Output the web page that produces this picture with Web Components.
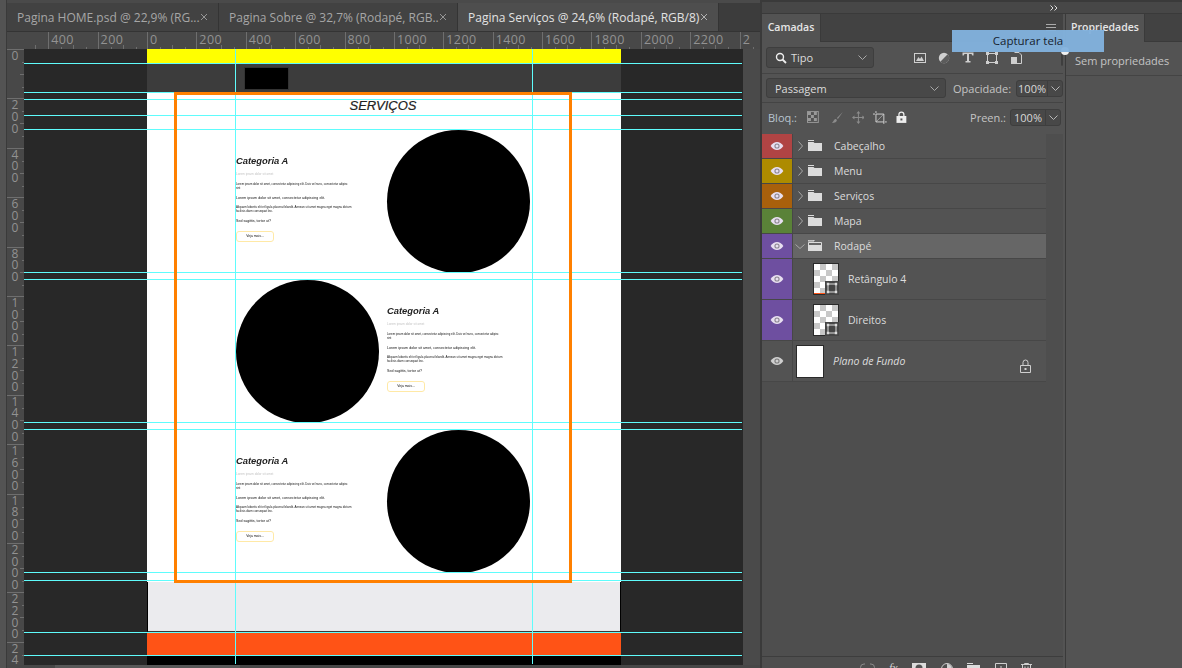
<!DOCTYPE html>
<html lang="pt"><head><meta charset="utf-8"><title>Photoshop</title>
<style>
html,body{margin:0;padding:0;background:#535353;overflow:hidden}
body{width:1182px;height:668px;font:11px "Open Sans","Noto Sans",sans-serif;color:#d4d4d4}
</style></head><body>
<ps-app></ps-app>
<script>
const def=(name,html,extra)=>{customElements.define(name,class extends HTMLElement{
  connectedCallback(){ if(this.shadowRoot)return; const s=this.attachShadow({mode:'open'}); s.innerHTML=typeof html==='function'?html(this):html; if(extra)extra(this,s);}
});};

def('ps-tab',el=>`<style>
:host{display:flex;align-items:center;box-sizing:border-box;height:28px;width:${el.getAttribute('w')}px;padding-left:10px;background:${el.hasAttribute('active')?'#4e4e4e':'#424242'};color:${el.hasAttribute('active')?'#e2e2e2':'#a6a6a6'};border-right:1px solid #343434;font-size:12px;white-space:nowrap;flex:none}
span{flex:1;overflow:hidden}
svg{margin-right:10px;flex:none}
</style><span><slot></slot></span><svg width="8" height="8" viewBox="0 0 8 8"><path d="M1 1l6 6M7 1L1 7" stroke="${el.hasAttribute('active')?'#bdbdbd':'#a0a0a0'}" stroke-width=".9"/></svg>`);

def('ps-tabs',`<style>:host{display:flex;height:28px;background:#3c3c3c;border-bottom:1px solid #343434;margin-top:3px}</style>
<ps-tab w="212">Pagina HOME.psd @ 22,9% (RG...</ps-tab><ps-tab w="239">Pagina Sobre @ 32,7% (Rodapé, RGB...</ps-tab><ps-tab w="261" active>Pagina Serviços @ 24,6% (Rodapé, RGB/8) *</ps-tab>`);

const TICK='#6e6e6e';
def('ps-ruler-h',()=>{
 const labels=['400','200','0','200','400','600','800','1000','1200','1400','1600','1800','2000','2200','2'];
 return `<style>
:host{display:flex;height:17px;background:#484848;overflow:hidden;color:#929292;font-size:12.5px;line-height:15px;letter-spacing:.4px}
.c{flex:none;width:49.4px;box-sizing:border-box;border-left:1px solid ${TICK};padding-left:2px;white-space:nowrap;overflow:hidden;height:17px;
background:linear-gradient(${TICK},${TICK}) 12px 100%/1px 2px no-repeat,linear-gradient(${TICK},${TICK}) 24px 100%/1px 4px no-repeat,linear-gradient(${TICK},${TICK}) 37px 100%/1px 2px no-repeat}
.f{flex:none;width:24.2px;background:linear-gradient(${TICK},${TICK}) 11px 100%/1px 4px no-repeat}
</style><div class="f"></div>${labels.map(l=>`<div class="c">${l}</div>`).join('')}`;
});

def('ps-ruler-v',()=>{
 const labels=['0','200','400','600','800','1000','1200','1400','1600','1800','2000','2200','24'];
 return `<style>
:host{display:block;width:17px;background:#484848;overflow:hidden;color:#929292;font-size:12px;line-height:11.7px}
.c{height:49.4px;box-sizing:border-box;border-top:1px solid ${TICK};padding:0 0 0 2px;overflow:hidden;
background:linear-gradient(${TICK},${TICK}) 100% 12px/2px 1px no-repeat,linear-gradient(${TICK},${TICK}) 100% 24px/4px 1px no-repeat,linear-gradient(${TICK},${TICK}) 100% 37px/2px 1px no-repeat}
.c:first-child{border-top-color:transparent}
i{display:block;font-style:normal;width:12px;text-align:center}
</style>${labels.map(l=>`<div class="c">${[...l].map(d=>`<i>${d}</i>`).join('')}</div>`).join('')}`;
});

def('ps-service',el=>`<style>
:host{display:flex;height:150px;width:294px;justify-content:space-between;flex-direction:${el.hasAttribute('flip')?'row-reverse':'row'}}
.t{width:143px;height:150px;color:#111;font-family:"Liberation Sans",Arial,sans-serif;white-space:nowrap;filter:blur(.2px)}
h3{margin:25px 0 0;font-size:9.4px;line-height:12px;font-style:italic;font-weight:bold;color:#222}
p{margin:0;line-height:4px}
.a{margin-top:5px;font-size:3.1px;color:#c4c4c4}
.b{margin-top:6px;font-size:2.82px}
.c{margin-top:6px;font-size:3.6px;letter-spacing:.03px}
.d{margin-top:5px;font-size:2.95px}
.e{margin-top:6px;font-size:3.6px}
.btn{margin-top:8px;box-sizing:border-box;width:38px;height:11px;border:1px solid #ffe9a6;border-radius:3px;font-size:3.4px;line-height:9px;text-align:center}
.circle{width:143px;height:143px;border-radius:50%;background:#000;flex:none}
</style><div class="t"><h3>Categoria A</h3>
<p class="a">Lorem ipsum dolor sit amet</p>
<p class="b">Lorem ipsum dolor sit amet, consectetur adipiscing elit. Duis vel nunc, consectetur adipisc<br>sint</p>
<p class="c">Lorem ipsum dolor sit amet, consectetur adipiscing elit.</p>
<p class="d">Aliquam lobortis elit et ligula placerat blandit. Aenean sit amet magna eget magna dictum<br>facilisis diam consequat leo.</p>
<p class="e">Sed sagittis, tortor ut?</p>
<div class="btn">Veja mais...</div></div><div class="circle"></div>`);

def('ps-canvas',()=>{
 const H=[63,92,99,115,129,272,279,422,429,572,580,632,655], V=[235,532];
 return `<style>
:host{display:block;position:relative;width:719px;height:616px;background:#282828;overflow:hidden;flex:none}
.page{width:474px;margin-left:123px;display:flex;flex-direction:column;height:616px}
.y{height:15px;background:#ffff00;flex:none}
.hd{height:29px;background:#3c3c3c;box-sizing:border-box;padding:4px 0 0 98px;flex:none}
.logo{width:43px;height:21px;background:#000;outline:1px solid #333}
.sv{height:489px;background:#fff;flex:none;box-sizing:border-box;padding-left:89px}
h2{margin:0;height:37px;width:295px;text-align:center;box-sizing:border-box;padding-top:5px;font:italic 13px/16px "Liberation Sans",Arial,sans-serif;color:#222;-webkit-text-stroke:.2px #222;margin-left:-3px;width:300px}
.ft{height:51px;box-sizing:border-box;background:#ebebee;border-left:1px solid #000;border-right:1px solid #000;border-bottom:2px solid #3a3a3a;flex:none}
.r{height:23px;background:#ff5316;flex:none}.k{flex:1;background:#000}
.g{position:absolute;background:#5ffcfc}
.gh{left:0;right:1px;height:1px}.gv{top:0;bottom:1px;width:1px}
.fr{position:absolute;left:150px;top:43px;width:398px;height:491px;box-sizing:border-box;border:3px solid #ff8000}
ps-service{display:flex}
</style><div class="page"><div class="y"></div><div class="hd"><div class="logo"></div></div>
<div class="sv"><h2>SERVIÇOS</h2><ps-service></ps-service><ps-service flip></ps-service><ps-service></ps-service></div>
<div class="ft"></div><div class="r"></div><div class="k"></div></div>
${H.map(y=>`<div class="g gh" style="top:${y-49}px"></div>`).join('')}${V.map(x=>`<div class="g gv" style="left:${x-24}px"></div>`).join('')}<div class="fr"></div>`;
});

const ICON={
 eye:c=>`<svg width="14" height="10" viewBox="0 0 14 10"><path d="M.6 5C2.4 2.2 4.6 1 7 1s4.6 1.2 6.4 4C11.6 7.8 9.4 9 7 9S2.4 7.8.6 5z" fill="${c}"/><circle cx="7" cy="5" r="2.6" fill="#0006"/><circle cx="7" cy="5" r="1.5" fill="${c}"/></svg>`,
 folder:`<svg width="14" height="11" viewBox="0 0 14 11"><path d="M0 0h6v1H0zM0 2h5.500l1 1H14v8H0z" fill="#dcdcdc"/></svg>`,
 open:`<svg width="14" height="11" viewBox="0 0 14 11"><path d="M0 0h6v1H0zM.5 2.500h13v8H.5z" fill="none" stroke="#dcdcdc"/><path d="M0 5h14v6H0z" fill="#dcdcdc"/></svg>`,
 right:`<svg width="5" height="10" viewBox="0 0 5 10"><path d="M.5.5L4.500 5 .5 9.500" fill="none" stroke="#a8a8a8"/></svg>`,
 down:`<svg width="10" height="5" viewBox="0 0 10 5"><path d="M.5.500L5 4.500 9.500.5" fill="none" stroke="#a8a8a8"/></svg>`
};

def('ps-layer',el=>{
 const kind=el.getAttribute('kind')||'group', color=el.getAttribute('color');
 const sel=el.hasAttribute('selected'), h={group:25,shape:41,bg:41}[kind];
 let mid='';
 if(kind==='group') mid=`<span class="chev">${sel?ICON.down:ICON.right}</span><span class="fo">${sel?ICON.open:ICON.folder}</span><span class="n" style="margin-left:12px"><slot></slot></span>`;
 if(kind==='shape') mid=`<span class="th"><span class="bd"><svg width="12" height="12" viewBox="0 0 12 12"><path d="M2 2h8v8H2z" fill="none" stroke="#ddd"/><path d="M.8.8h2.400v2.400H.8zM8.800.8h2.400v2.400H8.800zM.8 8.800h2.400v2.400H.8zM8.800 8.800h2.400v2.400H8.800z" fill="#ddd"/></svg></span>${el.hasAttribute('red')?'<span class="rd"></span>':''}</span><span class="n" style="margin-left:9px"><slot></slot></span>`;
 if(kind==='bg') mid=`<span class="wh"></span><span class="n" style="margin-left:10px;font-style:italic"><slot></slot></span><svg style="position:absolute;right:15px;top:18px" width="11" height="14" viewBox="0 0 11 14"><path d="M3 6V3.500a2.500 2.500 0 015 0V6" fill="none" stroke="#cfcfcf"/><path d="M.5 6.500h10v7H.5z" fill="none" stroke="#cfcfcf"/><rect x="4.500" y="9" width="2" height="2" fill="#cfcfcf"/></svg>`;
 return `<style>
:host{display:flex;position:relative;height:${h}px;box-sizing:border-box;border-bottom:1px solid #474747;background:${sel?'#666':'#535353'};align-items:center;color:#dcdcdc;font-size:10.5px}
.e{width:30px;height:100%;flex:none;background:${color||'transparent'};display:flex;align-items:center;justify-content:center;border-right:1px solid #474747;box-sizing:content-box}
.chev{width:${sel?10:5}px;margin-left:${sel?2:5}px;margin-right:${sel?3:5}px;display:flex;flex:none}
.fo{display:flex;flex:none;margin-top:-1px}
.th{position:relative;margin-left:20px;width:26px;height:32px;flex:none;box-sizing:border-box;border:1px solid #2a2a2a;border-width:1px 1px 1px 1px;
background:repeating-conic-gradient(#c8c8c8 0 25%,#fff 0 50%) 0 0/12px 12px}
.bd{position:absolute;right:-1px;bottom:-1px;width:14px;height:14px;background:#454545;display:flex;align-items:center;justify-content:center}
.rd{position:absolute;left:0;bottom:0;width:11px;height:1px;background:#ff5316}
.wh{margin-left:4px;width:26px;height:31px;background:#fff;outline:1px solid #2a2a2a;flex:none}
.n{white-space:nowrap}
</style><div class="e">${ICON.eye(color?'#e8dff0':'#cfcfcf')}</div>${mid}`;
});

def('ps-num',`<style>
:host{display:flex;width:51px;height:17px;box-sizing:border-box;border:1px solid #3e3e3e;border-radius:3px;background:#484848;color:#d8d8d8;font-size:11px;line-height:15px}
b{font-weight:normal;flex:1;text-align:center;border-right:1px solid #3e3e3e}
span{width:14px;display:flex;align-items:center;justify-content:center}
</style><b><slot></slot></b><span><svg width="9" height="5" viewBox="0 0 9 5"><path d="M.5.500L4.500 4.500 8.500.5" fill="none" stroke="#b8b8b8"/></svg></span>`);

def('ps-select',el=>`<style>
:host{display:flex;align-items:center;box-sizing:border-box;height:${el.getAttribute('h')||20}px;width:${el.getAttribute('w')}px;flex:none;border:1px solid #3e3e3e;border-radius:3px;background:#484848;padding:0 6px 0 8px;font-size:11px;color:#dcdcdc}
span{flex:1;display:flex;align-items:center;gap:4px}
</style><span><slot name="icon"></slot><slot></slot></span><svg width="9" height="5" viewBox="0 0 9 5"><path d="M.5.500L4.500 4.500 8.500.5" fill="none" stroke="#a8a8a8"/></svg>`);

def('ps-layers',`<style>
:host{display:flex;flex-direction:column;width:301px;height:100%;box-sizing:border-box;background:#535353;flex:none;font-size:11px;color:#c9c9c9}
.tabs{height:28px;background:#424242;display:flex;position:relative;border-bottom:1px solid #3a3a3a;box-sizing:border-box;flex:none}
.tab{width:59px;background:#535353;color:#e6e6e6;font-weight:600;font-size:10.5px;line-height:26px;text-align:center;margin-bottom:-1px;border-right:1px solid #3a3a3a;box-sizing:border-box}
.menu{position:absolute;left:284px;top:10px;width:10px;height:7px;border-top:1px solid #aaa;border-bottom:1px solid #aaa;box-sizing:border-box}
.menu:after{content:"";display:block;height:1px;background:#aaa;margin-top:2px}
.row{display:flex;align-items:center;box-sizing:border-box;border-bottom:1px solid #444;padding-left:4px;flex:none}
.f{height:32px}.bl{height:29px}.lk{height:28px;border:0;padding-left:6px}
.ico{display:flex;gap:0;margin-left:40px;align-items:center}
.ico svg{display:block;margin-right:12px}
.sw{position:relative;margin-left:4px;width:10px;height:18px;border:1px solid #3e3e3e;border-radius:5px;box-sizing:border-box;margin-top:-2px}
.sw:after{content:"";position:absolute;left:-1px;top:-2px;width:8px;height:8px;border-radius:50%;background:#f0f0f0}
.lb{color:#c4c4c4}
.lks{display:flex;align-items:center;margin-left:10px;width:100px}
.list{flex:1;min-height:0;background:#4e4e4e;margin-top:3px;display:flex;flex-direction:column}
.items{width:284px;background:#4e4e4e}
.bot{height:12px;border-top:1px solid #3d3d3d;box-sizing:border-box;flex:none;overflow:hidden;display:flex;padding-left:98px;padding-top:6px}
.bot svg{flex:none;display:block}
q{quotes:none;font-size:12px;font-family:"Liberation Serif",serif;font-style:italic;color:#d0d0d0;line-height:10px}
</style>
<div class="tabs"><div class="tab">Camadas</div><div class="menu"></div></div>
<div class="row f"><ps-select w="108" h="21"><svg slot="icon" width="12" height="12" viewBox="0 0 12 12"><circle cx="5" cy="5" r="3.500" fill="none" stroke="#eee" stroke-width="1.400"/><path d="M7.500 7.500L11 11" stroke="#eee" stroke-width="1.800"/></svg>Tipo</ps-select>
<div class="ico">
<svg width="12" height="10" viewBox="0 0 12 10"><rect x=".5" y=".5" width="11" height="9" fill="none" stroke="#cfcfcf"/><path d="M2 8l2.500-4 1.500 2 1.500-2.500L10 8z" fill="#cfcfcf"/></svg>
<svg width="12" height="12" viewBox="0 0 12 12"><circle cx="6" cy="6" r="5.200" fill="#cfcfcf"/><path d="M9.700 2.300A5.200 5.200 0 012.300 9.700z" fill="#5c5c5c"/></svg>
<svg width="12" height="11" viewBox="0 0 12 11"><path d="M.5.500h11v3h-1.200L9.500 2H7v7h1.500v1.500h-5V9H5V2H2.500L1.700 3.500H.5z" fill="#cfcfcf"/></svg>
<svg width="12" height="12" viewBox="0 0 12 12"><path d="M1.500 1.500h9v9h-9z" fill="none" stroke="#cfcfcf"/><path d="M0 0h3v3H0zM9 0h3v3H9zM0 9h3v3H0zM9 9h3v3H9z" fill="#cfcfcf"/></svg>
<svg width="11" height="12" viewBox="0 0 11 12" style="margin-left:1px"><path d="M3.500.5H8L10.500 3v8.500H5" fill="none" stroke="#cfcfcf"/><path d="M0 5h6v7H0z" fill="#cfcfcf"/></svg>
</div><div class="sw" style="margin-left:27px"></div></div>
<div class="row bl"><ps-select w="180">Passagem</ps-select><span class="lb" style="margin-left:7px;margin-right:5px">Opacidade:</span><ps-num>100%</ps-num></div>
<div class="row lk"><span class="lb" style="color:#b8c4d0">Bloq.:</span>
<div class="lks">
<svg width="12" height="12" viewBox="0 0 12 12" style="margin-right:12px"><rect x=".5" y=".5" width="11" height="11" fill="none" stroke="#999"/><path d="M1 1h3v3H1zM7 1h3v3H7zM4 4h3v3H4zM1 7h3v3H1zM7 7h3v3H7z" fill="#999"/></svg>
<svg width="13" height="13" viewBox="0 0 13 13" style="margin-right:8px"><path d="M12 1L6 7l1 1zM5 8C3 8 3 10 1 12c3 0 5-1 5-3z" fill="#8c8c8c"/></svg>
<svg width="13" height="13" viewBox="0 0 13 13" style="margin-right:9px"><path d="M6.500 0l2 2.500h-1.500v3.500h3.500V4.500L13 6.500l-2.500 2V7H7v3.500h1.500l-2 2.500-2-2.500H6V7H2.500v1.500L0 6.500l2.500-2V6H6V2.500H4.500z" fill="#8c8c8c"/></svg>
<svg width="14" height="13" viewBox="0 0 14 13" style="margin-right:9px"><path d="M3 3h8v8H3zM0 3h2M12 11h2M3 0v2M11 11v2" fill="none" stroke="#cfcfcf"/><path d="M3 11l8-8" stroke="#cfcfcf" stroke-width=".6"/></svg>
<svg width="11" height="12" viewBox="0 0 11 12"><path d="M3 5V3.500a2.500 2.500 0 015 0V5" fill="none" stroke="#eee" stroke-width="1.300"/><path d="M.5 5h10v7H.5z" fill="#eee"/><rect x="4.500" y="7.500" width="2" height="2" fill="#535353"/></svg>
</div><span class="lb" style="margin-left:63px;margin-right:4px">Preen.:</span><ps-num>100%</ps-num></div>
<div class="list"><div class="items">
<ps-layer color="#b04444">Cabeçalho</ps-layer><ps-layer color="#ad8b00">Menu</ps-layer><ps-layer color="#a8600c">Serviços</ps-layer><ps-layer color="#5a8238">Mapa</ps-layer><ps-layer color="#6e4fa0" selected>Rodapé</ps-layer>
<ps-layer color="#6e4fa0" kind="shape" red>Retângulo 4</ps-layer><ps-layer color="#6e4fa0" kind="shape">Direitos</ps-layer><ps-layer kind="bg">Plano de Fundo</ps-layer></div>
<div style="flex:1"></div>
<div class="bot">
<svg width="15" height="10" viewBox="0 0 15 10" style="margin-right:14px"><path d="M5 1H4a3 3 0 000 7h1M10 1h1a3 3 0 010 7h-1" fill="none" stroke="#8a8a8a"/></svg>
<q>fx</q>
<svg width="14" height="10" viewBox="0 0 14 10" style="margin-left:14px;margin-right:15px"><rect width="14" height="10" fill="#dcdcdc"/><circle cx="7" cy="5" r="3.500" fill="#535353"/></svg>
<svg width="12" height="10" viewBox="0 0 12 10" style="margin-right:14px"><circle cx="6" cy="6" r="5.500" fill="none" stroke="#cfcfcf"/><path d="M6 1a5 5 0 015 5H6z" fill="#cfcfcf"/></svg>
<svg width="13" height="10" viewBox="0 0 13 10" style="margin-right:15px"><path d="M0 0h6v1H0zM0 2h13v8H0z" fill="#dcdcdc"/></svg>
<svg width="12" height="10" viewBox="0 0 12 10" style="margin-right:14px"><path d="M.5.500h11v9H.5z" fill="none" stroke="#cfcfcf"/><path d="M6 3v5M3.500 5.500h5" stroke="#cfcfcf"/></svg>
<svg width="11" height="10" viewBox="0 0 11 10"><path d="M0 1.500h11M3.500 1.500V.5h4v1M1.500 2v8h8V2M4 3.500v6M7 3.500v6" fill="none" stroke="#cfcfcf"/></svg>
</div></div>`);

def('ps-props',`<style>
:host{display:flex;flex-direction:column;flex:1;min-width:0;background:#535353;font-size:11px;color:#c4c4c4;border-left:1px solid #3a3a3a;margin-left:2px}
.tabs{height:28px;background:#424242;border-bottom:1px solid #3a3a3a;box-sizing:border-box;flex:none}
.tab{width:79px;height:28px;background:#535353;color:#e6e6e6;font-weight:600;font-size:10.5px;line-height:26px;text-align:center;border-right:1px solid #3a3a3a;box-sizing:border-box}
.b{height:34px;box-sizing:border-box;border-bottom:1px solid #444;padding:11px 0 0 9px;line-height:15px}
</style><div class="tabs"><div class="tab">Propriedades</div></div><div class="b">Sem propriedades</div>`);

def('ps-tip',`<style>
:host{position:absolute;left:952px;top:30px;width:152px;height:22px;background:rgba(130,178,222,.96);color:#16222e;font-size:11.5px;line-height:22px;text-align:center;padding-left:0;box-sizing:border-box}
</style><slot></slot>`);

def('ps-app',`<style>
:host{display:flex;position:relative;width:1182px;height:668px;overflow:hidden;background:#535353}
.tool{width:6px;background:#535353;border-right:1px solid #3a3a3a;flex:none}
.doc{width:753px;display:flex;flex-direction:column;flex:none;background:#4a4a4a}
.rt{display:flex;height:17px;flex:none}
.corner{width:17px;background:#484848;flex:none}
.mid{display:flex;flex:none;height:616px}
.sb{height:3px;flex:none;background:#474747;display:flex}
.sb i{display:block;margin-left:48px;width:185px;background:#585858}
.pn{flex:1;display:flex;flex-direction:column;min-width:0;border-left:2px solid #3a3a3a;box-sizing:border-box}
.strip{height:14px;flex:none;background:#474747;border-top:2px solid #3a3a3a;border-bottom:1px solid #3a3a3a;box-sizing:border-box;color:#ddd;text-align:right;padding-right:125px;position:relative}
.strip svg{position:absolute;left:288px;top:3px}
.ps{flex:1;display:flex;min-height:0}
.rh{flex:1;min-width:0}
</style>
<div class="tool"></div>
<div class="doc"><ps-tabs></ps-tabs><div class="rt"><div class="corner"></div><ps-ruler-h class="rh"></ps-ruler-h></div>
<div class="mid"><ps-ruler-v></ps-ruler-v><ps-canvas></ps-canvas></div><div class="sb"><i></i></div></div>
<div class="pn"><div class="strip"><svg width="8" height="6" viewBox="0 0 8 6"><path d="M.5.500L3 3 .5 5.500M4.500.5L7 3 4.500 5.500" fill="none" stroke="#ddd"/></svg></div>
<div class="ps"><ps-layers></ps-layers><ps-props></ps-props></div></div>
<ps-tip>Capturar tela</ps-tip>`);
</script></body></html>
